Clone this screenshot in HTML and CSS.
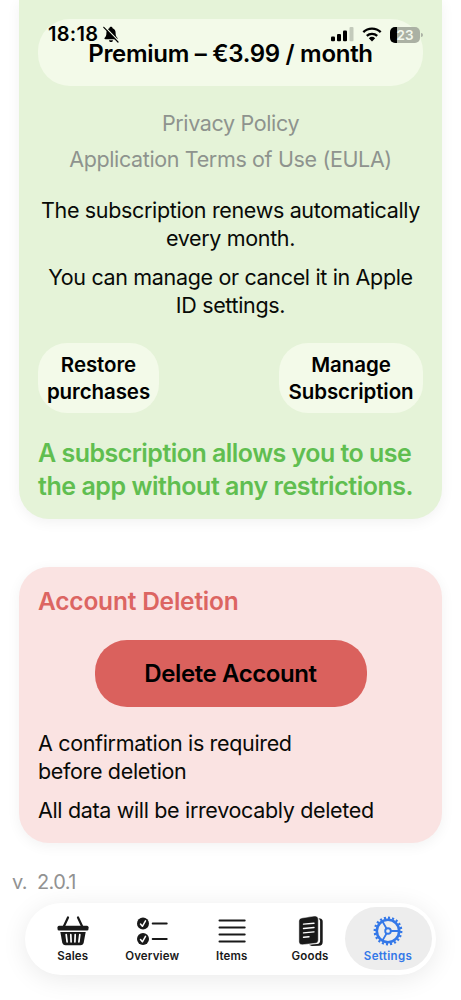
FILE: index.html
```
<!DOCTYPE html>
<html lang="en">
<head>
<meta charset="utf-8">
<title>Settings</title>
<link rel="stylesheet" href="styles.css">
</head>
<body>
<div class="screen">
  <header class="status">
    <div class="status-left">
      <span class="clock">18:18</span>
      <svg class="bell" viewBox="0 0 16 17" width="16" height="17">
        <path d="M8 .8c.9 0 1.5.6 1.6 1.4 2 .7 3 2.400 3 4.600 0 3 .7 3.900 1.700 5 .6.700.2 1.500-.7 1.500H2.400c-.9 0-1.300-.8-.7-1.500 1-1.100 1.700-2 1.700-5 0-2.200 1-3.900 3-4.600C6.500 1.400 7.100.8 8 .8z"/>
        <path d="M6 14.200h4c-.2 1.200-1 1.900-2 1.900s-1.800-.7-2-1.900z"/>
        <path class="bell-gap" d="M1.700.8l14 14.400"/>
        <path class="bell-slash" d="M.8 1.300l14.200 14.700"/>
      </svg>
    </div>
    <div class="status-right">
      <svg viewBox="0 0 24 15" width="24" height="15">
        <rect x="1" y="9.500" width="4" height="4.800" rx="1.100"/>
        <rect x="7" y="7" width="4" height="7.300" rx="1.100"/>
        <rect x="13" y="3.500" width="4" height="10.800" rx="1.100"/>
        <rect class="faint" x="19.500" y="0" width="4" height="14.300" rx="1.100"/>
      </svg>
      <svg viewBox="0 0 20 15" width="20" height="15">
        <g class="wave"><path d="M1.300 5.200a12.500 12.500 0 0 1 17.400 0"/><path d="M4.800 8.900a7.500 7.500 0 0 1 10.400 0"/></g>
        <path d="M6.800 11.300a4.700 4.700 0 0 1 6.400 0L10 14.600z"/>
      </svg>
      <div class="battery"><span class="battery-level">23</span><i class="battery-tip"></i></div>
    </div>
  </header>

  <main class="content">
    <section class="card card-green">
      <button class="pill premium">Premium – €3.99 / month</button>
      <nav class="links">
        <a class="link-privacy">Privacy Policy</a>
        <a class="link-terms">Application Terms of Use (EULA)</a>
      </nav>
      <p class="body centered">The subscription renews automatically<br>every month.</p>
      <p class="body centered">You can manage or cancel it in Apple<br>ID settings.</p>
      <div class="actions">
        <button class="pill small restore">Restore<br>purchases</button>
        <button class="pill small manage">Manage<br>Subscription</button>
      </div>
      <p class="promo">A subscription allows you to use<br><span class="promo-end">the app without any restrictions.</span></p>
    </section>

    <section class="card card-red">
      <h2 class="danger-title">Account Deletion</h2>
      <button class="pill delete">Delete Account</button>
      <p class="body">A confirmation is required<br>before deletion</p>
      <p class="body">All data will be irrevocably deleted</p>
    </section>
    <p class="version">v.&nbsp; 2.0.1</p>
  </main>

  <nav class="tabs">
    <a class="tab">
      <svg viewBox="0 0 32 30" width="32" height="30">
        <path class="stroke" d="M6.800 10.500L11 1.500M25.200 10.500L21 1.500"/>
        <rect x=".5" y="9.800" width="31" height="4.600" rx="1.500"/>
        <path d="M3.300 16h25.400l-1.900 10.300c-.4 2-1.400 3-3.400 3H8.600c-2 0-3-1-3.400-3z"/>
        <path class="knock" d="M9.200 18.700l.9 7.200M13.800 18.700l.3 7.200M18.200 18.700l-.3 7.200M22.800 18.700l-.9 7.200"/>
      </svg>
      <span>Sales</span>
    </a>
    <a class="tab">
      <svg viewBox="0 0 32 30" width="32" height="30">
        <circle cx="7" cy="7.500" r="6"/><circle cx="7" cy="23" r="6"/>
        <path class="check" d="M4.500 8l1.900 2.300L9.500 4.900M4.500 23.500l1.900 2.300 3.100-5.400"/>
        <path class="stroke thin" d="M16.700 7.500h14M16.700 23h14"/>
      </svg>
      <span>Overview</span>
    </a>
    <a class="tab">
      <svg viewBox="0 0 32 30" width="32" height="30">
        <path class="stroke thin" d="M3.500 4.500h25.200M3.500 11.500h25.200M3.500 18.500h25.200M3.500 25.500h25.200"/>
      </svg>
      <span>Items</span>
    </a>
    <a class="tab narrow">
      <svg viewBox="0 0 32 30" width="32" height="30">
        <path d="M24 2.200l2 .3c1.800.2 2.700 1.200 2.700 3v20.200c0 2.500-1.200 4-3.600 4.100l-7.300.2-3-1.200 8.300-.8c2-.2 3-1.300 3-3.200V5c0-1.300-.8-2.200-2.100-2.800z"/>
        <path class="doc-front" d="M7.800 2L20 .1c2.700-.4 4.300.8 4.300 3.400v20.300c0 2.100-1 3.300-3 3.500l-12.600 1.400c-2.500.2-3.800-.9-3.800-3.300V5.300C4.900 3.500 6 2.300 7.800 2z"/>
        <path class="doc-lines" d="M9.500 8.100l10.500-.9M9.500 12.500l10.500-1M9.500 16.900l10.500-1M9.500 21.200l5.500-.5"/>
      </svg>
      <span>Goods</span>
    </a>
    <a class="tab active">
      <svg class="gear" viewBox="0 0 32 30" width="32" height="30">
        <circle class="teeth" cx="16" cy="15" r="13.200" pathLength="200"/>
        <circle class="ring" cx="16" cy="15" r="11.200"/>
        <circle class="ring hub" cx="16" cy="15" r="2.800"/>
        <path class="ring spoke" d="M18.800 15h8.600M14.600 12.600L10.300 5.100M14.600 17.400l-4.300 7.500"/>
      </svg>
      <span>Settings</span>
    </a>
  </nav>
</div>
</body>
</html>
```
FILE: styles.css
```
* { box-sizing: border-box; }
body { margin: 0; background: #fff; font-family: Inter, "Liberation Sans", sans-serif; color: #080a07; }
p, h2 { margin: 0; }
button { border: 0; padding: 0; font: inherit; color: #000; }

.screen { position: relative; width: 461px; height: 1000px; overflow: hidden; background: #fff; }

.status { position: absolute; z-index: 2; top: 24px; left: 48px; right: 38px; height: 21px; display: flex; justify-content: space-between; align-items: center; color: #000; }
.status-left { display: flex; align-items: center; gap: 5px; }
.status-right { display: flex; align-items: center; gap: 8px; }
.clock { font-size: 20px; font-weight: 600; letter-spacing: 0.3px; line-height: 21px; }
.bell-gap { stroke: #f3fae9; stroke-width: 1.3; }
.bell-slash { stroke: #000; stroke-width: 1.2; stroke-linecap: round; }
.faint { fill: #c3cabb; }
.wave { fill: none; stroke: #000; stroke-width: 2.3; }
.battery { position: relative; width: 30px; height: 16px; border-radius: 5px; background: linear-gradient(to right, #000 7px, #abb1a4 7px); display: flex; justify-content: center; align-items: center; margin-right: 3px; }
.battery-level { color: #f3f8ed; font-size: 13.5px; font-weight: 600; line-height: 16px; }
.battery-tip { position: absolute; right: -3px; top: 6px; width: 2px; height: 4px; border-radius: 0 2px 2px 0; background: #abb1a4; }

.content { display: flex; flex-direction: column; padding: 0 19px; }
.card { padding: 19px; border-radius: 30px; box-shadow: 0 3px 14px rgba(0, 0, 0, 0.055); }
.card-green { height: 519px; border-radius: 0 0 30px 30px; background: #e5f3d8; }
.card-red { height: 276px; margin-top: 48px; padding-top: 18px; background: #fae3e2; display: flex; flex-direction: column; }

.pill { background: #f3fae9; font-weight: 600; border-radius: 32px; text-align: center; }
.premium { display: block; width: 385px; height: 67px; padding-top: 1px; font-size: 24px; letter-spacing: -0.3px; }
.links { display: flex; flex-direction: column; align-items: center; margin-top: 19px; color: #8e938e; font-size: 21.5px; line-height: 36px; letter-spacing: -0.36px; }
.link-terms { white-space: nowrap; }
.body { font-size: 21.5px; line-height: 28px; letter-spacing: -0.34px; white-space: nowrap; }
.centered { text-align: center; }
.links + .body { margin-top: 19px; }
.body + .body { margin-top: 11px; }
.actions { display: flex; justify-content: space-between; margin-top: 24px; }
.small { height: 70px; font-size: 20.5px; line-height: 27px; letter-spacing: -0.08px; border-radius: 29px; }
.restore { width: 121px; }
.manage { width: 144px; }
.promo { margin-top: 24px; color: #60be50; font-size: 25px; font-weight: 600; line-height: 33px; letter-spacing: -0.53px; white-space: nowrap; }
.promo-end { letter-spacing: -0.46px; }

.danger-title { color: #dc6562; font-size: 24.5px; line-height: 32px; font-weight: 600; letter-spacing: -0.2px; }
.delete { width: 272px; height: 67px; margin: 23px 0 22px; align-self: center; background: #da615d; font-size: 24px; letter-spacing: -0.4px; flex: none; }
.version { margin: 25px 0 0 -7px; color: #929292; font-size: 20px; line-height: 28px; letter-spacing: -0.6px; }

.tabs { position: absolute; z-index: 2; left: 25px; top: 903px; width: 411px; height: 72px; display: flex; padding: 4px; border-radius: 36px; background: #fff; box-shadow: 0 4px 26px rgba(0, 0, 0, 0.085); }
.tab { flex: none; width: 79.500px; height: 64px; display: flex; flex-direction: column; align-items: center; padding-top: 9px; font-size: 11.5px; line-height: 15px; font-weight: 600; letter-spacing: 0.15px; color: #191919; fill: #191919; }
.tab:first-child { margin-left: 4px; }
.tab svg { display: block; margin-bottom: 3px; }
.narrow { width: 77px; }
.active { width: 87px; height: 63px; margin-left: -4px; letter-spacing: 0.35px; color: #3478e8; background: #ededed; border-radius: 32px; }
.stroke { fill: none; stroke: #191919; stroke-width: 2.2; stroke-linecap: round; }
.thin { stroke-width: 2; }
.knock { fill: none; stroke: #fff; stroke-width: 1.7; stroke-linecap: round; }
.check { fill: none; stroke: #fff; stroke-width: 1.5; stroke-linecap: round; stroke-linejoin: round; }
.doc-front { stroke: #fff; stroke-width: 0.5; }
.doc-lines { fill: none; stroke: #fff; stroke-width: 1.4; stroke-linecap: round; }
.ring { fill: none; stroke: #3478e8; stroke-width: 2.6; }
.hub, .spoke { stroke-width: 1.9; }
.teeth { fill: none; stroke: #3478e8; stroke-width: 2.4; stroke-dasharray: 5 5; }
```
